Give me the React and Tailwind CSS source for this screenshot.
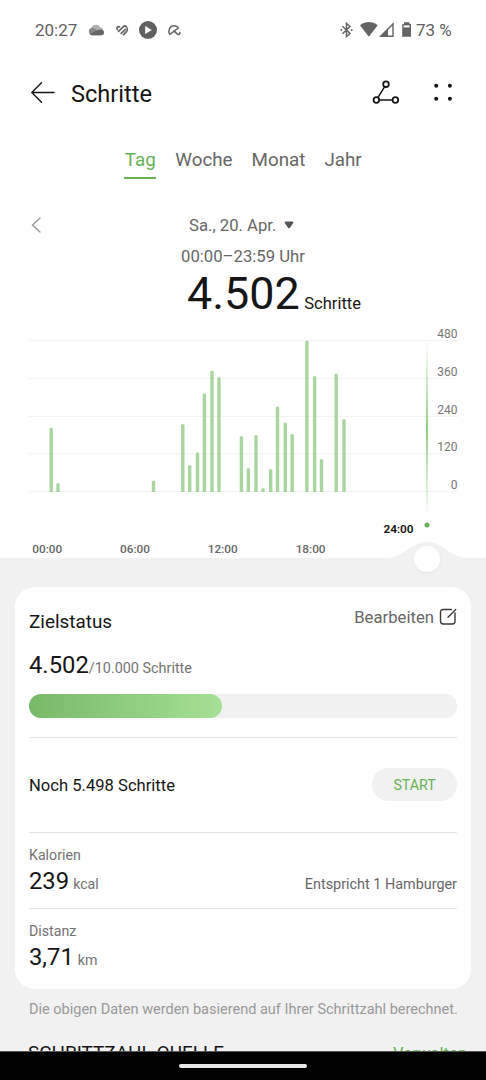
const GRID = [
  { y: 340.5, label: '480' },
  { y: 378.5, label: '360' },
  { y: 416.5, label: '240' },
  { y: 454, label: '120' },
  { y: 491.5, label: '0' },
];

// [centre x, top y] of each interval with recorded steps
const BARS = [
  [51.2, 427.5], [58, 483], [153.5, 480.5], [182.8, 424], [189.7, 465], [197.5, 452.3],
  [204.4, 393.3], [212, 370.5], [219, 377], [241.4, 436], [248.3, 468], [256, 435],
  [263, 488], [270.7, 469], [277.5, 406.5], [285.3, 422.5], [292.2, 434], [306.9, 340.5],
  [314.6, 376], [321.5, 459], [336.2, 373.5], [344, 419],
];

const HOURS = [
  { x: 47.3, label: '00:00' },
  { x: 135, label: '06:00' },
  { x: 222.8, label: '12:00' },
  { x: 310.6, label: '18:00' },
];

function StatusBar() {
  return (
    <div className="flex h-[60px] items-center pl-[35px] pr-[34px] text-[#5f5f5f]">
      <span className="w-[53px] text-[17px] leading-5">20:27</span>
      <svg width="94" height="20" viewBox="88 20 94 20" fill="none">
        <path d="M91 29.500a5 5 0 0 1 9.200-2.300 3.900 3.900 0 0 1 3.200 3.300L97 32z" fill="#b0b0b0" />
        <path d="M92 35.200a3.700 3.700 0 0 1-.5-7.200c1.800-.3 3.200.4 4.500 1.300l7.600 4.800c-.8.7-1.500 1.100-2.600 1.100z" fill="#888" />
        <path d="M89.500 34l8.600-3.900c3-1.300 5.900-.1 5.900 2.100a3 3 0 0 1-3 3h-9a4.500 4.500 0 0 1-2.500-1.200z" fill="#646464" />
        <g stroke="#646464" strokeWidth="1.700" strokeLinecap="round">
          <path d="M117.500 29.600c-1.600-1.600.2-3.800 2-2.600" />
          <path d="M118.600 31.300l4.600-4.500c1-.9 2.400-.9 3.300 0" />
          <path d="M121.200 33.400l4.100-4.100" />
          <path d="M123.600 34.600l2.900-2.900c.8-.9 1.100-2.200.7-3.300" />
        </g>
        <circle cx="148" cy="30" r="9" fill="#5f5f5f" />
        <path d="M145.200 26v8l6.600-4z" fill="#fff" />
        <g stroke="#646464" strokeWidth="1.500" strokeLinecap="round" strokeLinejoin="round">
          <path d="M169.800 34.400c-2.300-3.900.2-8.700 4.200-8.700 1.700 0 3.400.6 4.300 2.300z" />
          <path d="M174.200 31.100l2.900 2.800c1.500 1.200 3.200.2 2.800-1.400" />
        </g>
      </svg>
      <svg className="ml-auto" width="75" height="20" viewBox="339 20 75 20" fill="none">
        <path d="M342.500 26.300l7.500 7.200-3.500 3V23.500l3.500 3-7.500 7.200" stroke="#646464" strokeWidth="1.500" />
        <circle cx="341.300" cy="30" r="1" fill="#646464" />
        <circle cx="351.700" cy="30" r="1" fill="#646464" />
        <path d="M360 25.200c5.200-4.200 12.500-4.200 17.700 0L368.800 36.700z" fill="#646464" />
        <path d="M380.800 36.200L393 24v12.200z" stroke="#646464" strokeWidth="1.400" />
        <path d="M379.500 36.700l8.500-8.500v8.500z" fill="#646464" />
        <path d="M404 22.300h5.500v1.700h1.500v12.700h-8.800V24h1.800z" fill="#646464" />
        <path d="M403.600 25.400h6v2h-6z" fill="#fff" />
      </svg>
      <span className="ml-[2.500px] w-[36px] whitespace-nowrap text-[17px] leading-5">73 %</span>
    </div>
  );
}

function Header() {
  return (
    <header className="flex h-[66px] items-center pl-[30px] pr-[32px] text-[#161616]">
      <svg width="26" height="22" viewBox="0 0 26 22" fill="none" stroke="currentColor" strokeWidth="1.400" strokeLinecap="round" strokeLinejoin="round">
        <path d="M24 10.500H1.800M11.500.800L1.800 10.500l9.700 9.700" />
      </svg>
      <h1 className="ml-[15px] pt-[2px] text-[23.600px] leading-7">Schritte</h1>
      <svg className="ml-auto" width="28" height="26" viewBox="372 80 28 26" fill="none" stroke="currentColor" strokeWidth="1.800">
        <path d="M378 97.300l6.700-10.600M379.500 100h13" strokeWidth="1.500" />
        <circle cx="386" cy="84.200" r="2.800" />
        <circle cx="376.400" cy="100" r="2.800" />
        <circle cx="395.400" cy="100" r="2.800" />
      </svg>
      <svg className="ml-[32px]" width="22" height="26" viewBox="432 80 22 26" fill="currentColor">
        <circle cx="436.200" cy="85.800" r="2" />
        <circle cx="449.900" cy="85.800" r="2" />
        <circle cx="436.200" cy="98.700" r="2" />
        <circle cx="449.900" cy="98.700" r="2" />
      </svg>
    </header>
  );
}

function Tabs() {
  return (
    <nav className="flex h-[74px] justify-center pt-[21px] text-[18.800px] leading-[26px] text-[#666]">
      <div className="mr-[19px] h-[32px] w-[32px] border-b-2 border-[#67b257] text-center text-[#67b257]">Tag</div>
      <div className="mr-[19px]">Woche</div>
      <div className="mr-[19px]">Monat</div>
      <div>Jahr</div>
    </nav>
  );
}

function DaySummary() {
  return (
    <section className="h-[120px] pt-[13px] text-[16.700px] leading-[26px] text-[#666]">
      <div className="flex items-center pl-[30px]">
        <svg className="mb-[2px]" width="12" height="18" viewBox="0 0 12 18" fill="none" stroke="#999" strokeWidth="1.400" strokeLinecap="round">
          <path d="M10 2L2.500 9l7.500 7" />
        </svg>
        <span className="ml-[147px] whitespace-pre">Sa., 20. Apr.</span>
        <svg className="mb-[3px] ml-[8px]" width="10" height="8" viewBox="0 0 10 8">
          <path d="M1.500.500h7q1.400.300.700 1.500L6 6.800q-1 1-2 0L.800 2Q.100.800 1.500.500z" fill="#555" />
        </svg>
      </div>
      <div className="mt-[5px] text-center">00:00–23:59 Uhr</div>
      <div className="-mt-px flex items-baseline pl-[187px] text-[#161616]">
        <span className="text-[44.900px] leading-[50px]">4.502</span>
        <span className="ml-[4.500px] text-[16.500px]">Schritte</span>
      </div>
    </section>
  );
}

function Chart() {
  return (
    <svg className="block" width="486" height="267" viewBox="0 320 486 267" fontFamily="Roboto, sans-serif">
      <defs>
        <linearGradient id="cursor" x1="0" y1="0" x2="0" y2="1">
          <stop offset="0" stopColor="#9bd38f" stopOpacity="0" />
          <stop offset="0.500" stopColor="#8fcc82" />
          <stop offset="1" stopColor="#9bd38f" stopOpacity="0" />
        </linearGradient>
        <filter id="knob" x="-30%" y="-30%" width="160%" height="160%">
          <feDropShadow dx="0" dy="1" stdDeviation="1.500" floodOpacity="0.050" />
        </filter>
      </defs>
      <path d="M0 558H386C402 558 412 542 427 542S451 558 468 558H486V587H0z" fill="#f1f1f1" />
      {GRID.map(({ y, label }) => (
        <g key={label}>
          <path d={`M28 ${y}H458`} stroke="#f3f3f3" />
          <text x="457.500" y={y - 2.8} textAnchor="end" fontSize="12" fill="#777">{label}</text>
        </g>
      ))}
      {BARS.map(([x, y]) => (
        <path key={x} d={`M${x - 1.7} 492V${y + 1.5}q0-1.500 1.700-1.500t1.700 1.500V492z`} fill="#a9d69f" />
      ))}
      <rect x="426" y="340" width="2" height="178" fill="url(#cursor)" />
      <circle cx="427" cy="525" r="2.500" fill="#67b257" />
      <circle cx="427" cy="559" r="13" fill="#fff" filter="url(#knob)" />
      {HOURS.map(({ x, label }) => (
        <text key={label} x={x} y="552.700" textAnchor="middle" fontSize="11.800" fontWeight="500" fill="#666">{label}</text>
      ))}
      <text x="398.500" y="533" textAnchor="middle" fontSize="11.800" fontWeight="600" fill="#111">24:00</text>
    </svg>
  );
}

function Metric({ label, value, unit, note, className }) {
  return (
    <div className={className}>
      <div className="text-[14.200px] leading-5 text-[#737373]">{label}</div>
      <div className="flex items-baseline">
        <span className="text-[23.800px] leading-8 text-[#161616]">{value}</span>
        <span className="ml-[4px] text-[14.200px] text-[#737373]">{unit}</span>
        {note && <span className="ml-auto text-[14.400px] text-[#666]">{note}</span>}
      </div>
    </div>
  );
}

function GoalCard() {
  return (
    <section className="mx-[15px] h-[402px] rounded-[20px] bg-white px-[14px] text-[#161616]">
      <div className="flex h-[62px] justify-between">
        <h2 className="pt-[22px] text-[18.900px] leading-[26px]">Zielstatus</h2>
        <div className="flex pt-[18px] text-[16.700px] leading-[26px] text-[#666]">
          Bearbeiten
          <svg className="ml-[5px] mt-[3px]" width="18" height="18" viewBox="0 0 18 18" fill="none" stroke="#3a3a3a" strokeWidth="1.400" strokeLinecap="round">
            <path d="M12.500 1.500H4.200Q1.500 1.500 1.500 4.200v9.100Q1.500 16 4.200 16h9.100q2.700 0 2.700-2.700V5M9 9.200L16.700 1.500" />
          </svg>
        </div>
      </div>
      <div className="flex h-[45px] items-baseline">
        <span className="text-[23.800px] leading-8">4.502</span>
        <span className="text-[14.400px] text-[#737373]">/10.000 Schritte</span>
      </div>
      <div className="h-[24px] rounded-full bg-[#f1f1f1]">
        <div className="h-full w-[193px] rounded-full bg-gradient-to-r from-[#78b968] to-[#a6e096]" />
      </div>
      <div className="mt-[19px] flex h-[96px] items-center justify-between border-y border-[#e4e4e4]">
        <span className="pt-[2px] text-[16.600px] leading-6">Noch 5.498 Schritte</span>
        <button className="mb-px h-[33px] w-[85px] rounded-full bg-[#f1f1f1] text-[14.200px] leading-5 text-[#67b257]">START</button>
      </div>
      <Metric className="h-[76px] border-b border-[#e4e4e4] pt-[12px]" label="Kalorien" value="239" unit="kcal" note="Entspricht 1 Hamburger" />
      <Metric className="pt-[12px]" label="Distanz" value="3,71" unit="km" />
    </section>
  );
}

export default function App() {
  return (
    <main className="flex h-[1080px] w-[486px] flex-col overflow-hidden bg-white font-['Roboto',sans-serif]">
      <StatusBar />
      <Header />
      <Tabs />
      <DaySummary />
      <Chart />
      <div className="h-[464px] shrink-0 overflow-hidden bg-[#f1f1f1]">
        <GoalCard />
        <p className="mt-[11px] whitespace-nowrap pl-[29px] text-[14.500px] leading-5 text-[#999]">
          Die obigen Daten werden basierend auf Ihrer Schrittzahl berechnet.
        </p>
        <div className="mt-[20px] flex items-start justify-between pl-[28px] pr-[19px]">
          <span className="text-[18.900px] leading-[26px] text-[#161616]">SCHRITTZAHL-QUELLE</span>
          <span className="pt-px text-[16.700px] leading-[26px] text-[#67b257]">Verwalten</span>
        </div>
      </div>
      <footer className="flex h-[29px] shrink-0 justify-center border-t border-[#555] bg-black pt-[12px]">
        <div className="h-[4px] w-[128px] rounded-full bg-[#e8e8e8]" />
      </footer>
    </main>
  );
}
